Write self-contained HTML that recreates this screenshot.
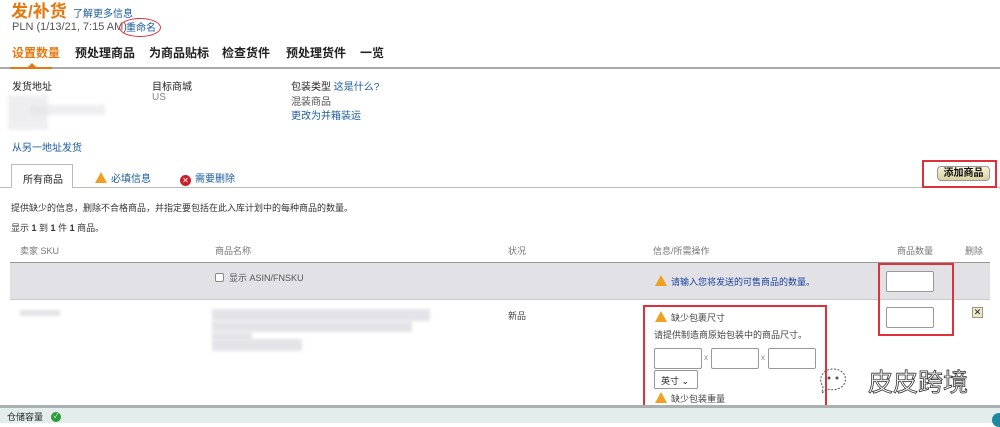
<!DOCTYPE html>
<html><head><meta charset="utf-8"><style>
*{margin:0;padding:0;box-sizing:border-box}
body{width:1000px;height:423px;overflow:hidden;background:#fff;font-family:"Liberation Sans","Noto Sans CJK SC",sans-serif;font-size:10px;color:#333;position:relative}
.a{position:absolute;white-space:nowrap}
.b{color:#1a5a9c}
.blur{position:absolute;background:#e4e4e8;filter:blur(1.5px)}
.inp{position:absolute;border:1px solid #999;background:#fff;border-radius:2px}
.warn{display:inline-block;width:0;height:0;border-left:6px solid transparent;border-right:6px solid transparent;border-bottom:11px solid #f0a020;vertical-align:-1px;margin-right:4px}
.rb{position:absolute;border:2px solid #e0303a}
</style></head><body>
<div class="a" style="left:11px;top:2px;font-size:17px;line-height:20px;font-weight:bold;color:#e47911">发/补货</div>
<div class="a b" style="left:73px;top:5px;font-size:10px">了解更多信息</div>
<div class="a" style="left:12px;top:21px;font-size:11px;line-height:13px;color:#555">PLN (1/13/21, 7:15 AM)</div>
<div class="a b" style="left:126px;top:19px;font-size:10px">重命名</div>
<div class="a" style="left:119px;top:18px;width:42px;height:19px;border:1.5px solid #e0303a;border-radius:50%"></div>
<div class="a" style="left:12px;top:44px;font-size:12px;font-weight:bold;color:#e47911">设置数量</div>
<div class="a" style="left:75px;top:44px;font-size:12px;font-weight:bold;color:#222">预处理商品</div>
<div class="a" style="left:149px;top:44px;font-size:12px;font-weight:bold;color:#222">为商品贴标</div>
<div class="a" style="left:222px;top:44px;font-size:12px;font-weight:bold;color:#222">检查货件</div>
<div class="a" style="left:286px;top:44px;font-size:12px;font-weight:bold;color:#222">预处理货件</div>
<div class="a" style="left:360px;top:44px;font-size:12px;font-weight:bold;color:#222">一览</div>
<div class="a" style="left:0;top:67px;width:1000px;height:2px;background:#aaa"></div>
<div class="a" style="left:10px;top:67px;width:42px;height:2px;background:#e47911"></div>
<div class="a" style="left:28px;top:63px;border-left:4px solid transparent;border-right:4px solid transparent;border-bottom:4px solid #e47911"></div>
<div class="a" style="left:12px;top:78px;font-size:10px;color:#222">发货地址</div>
<div class="a" style="left:152px;top:78px;font-size:10px;color:#222">目标商城</div>
<div class="a" style="left:152px;top:92px;font-size:10px;color:#888">US</div>
<div class="a" style="left:291px;top:78px;font-size:10px;color:#222">包装类型 <span class="b">这是什么?</span></div>
<div class="a" style="left:291px;top:93px;font-size:10px;color:#555">混装商品</div>
<div class="a b" style="left:291px;top:107px;font-size:10px">更改为并箱装运</div>
<div class="blur" style="left:8px;top:95px;width:40px;height:35px;opacity:.6"></div>
<div class="blur" style="left:30px;top:105px;width:75px;height:10px;opacity:.6"></div>
<div class="a b" style="left:12px;top:139px;font-size:10px">从另一地址发货</div>
<div class="a" style="left:0;top:187px;width:1000px;height:1px;background:#bbb"></div>
<div class="a" style="left:11px;top:164px;width:62px;height:24px;border:1px solid #bbb;border-bottom:none;background:#fff"></div>
<div class="a" style="left:23px;top:171px;font-size:10px;color:#222">所有商品</div>
<div class="a b" style="left:95px;top:170px;font-size:10px"><span class="warn"></span>必填信息</div>
<div class="a b" style="left:180px;top:170px;font-size:10px"><span style="display:inline-block;width:11px;height:11px;border-radius:50%;background:#c8202a;color:#fff;font-size:8px;line-height:11px;text-align:center;vertical-align:-1px;margin-right:4px">✕</span>需要删除</div>
<div class="rb" style="left:922px;top:160px;width:75px;height:28px"></div>
<div class="a" style="left:937px;top:166px;width:53px;height:15px;border:1px solid #999;border-radius:4px;background:linear-gradient(#f6f2d6,#d8d2a0);font-size:10px;font-weight:bold;color:#111;text-align:center;line-height:13px">添加商品</div>
<div class="a" style="left:11px;top:201px;font-size:9px;color:#333">提供缺少的信息，删除不合格商品，并指定要包括在此入库计划中的每种商品的数量。</div>
<div class="a" style="left:11px;top:221px;font-size:9px;color:#333">显示 <b>1</b> 到 <b>1</b> 件 <b>1</b> 商品。</div>
<div class="a" style="left:20px;top:244px;font-size:9px;color:#777">卖家 SKU</div>
<div class="a" style="left:215px;top:244px;font-size:9px;color:#777">商品名称</div>
<div class="a" style="left:508px;top:244px;font-size:9px;color:#777">状况</div>
<div class="a" style="left:653px;top:244px;font-size:9px;color:#777">信息/所需操作</div>
<div class="a" style="left:897px;top:244px;font-size:9px;color:#777">商品数量</div>
<div class="a" style="left:965px;top:244px;font-size:9px;color:#777">删除</div>
<div class="a" style="left:10px;top:262px;width:980px;height:38px;background:#e2e2e6;border-top:1.5px solid #999;border-bottom:1px solid #ccc"></div>
<div class="a" style="left:215px;top:273px;width:9px;height:9px;border:1px solid #888;background:#fff;border-radius:2px"></div>
<div class="a" style="left:229px;top:271px;font-size:9px;color:#555">显示 ASIN/FNSKU</div>
<div class="a" style="left:655px;top:275px;font-size:9px;color:#1a3f9c"><span class="warn"></span>请输入您将发送的可售商品的数量。</div>
<div class="rb" style="left:878px;top:263px;width:76px;height:73px"></div>
<div class="inp" style="left:886px;top:271px;width:48px;height:21px"></div>
<div class="inp" style="left:886px;top:307px;width:48px;height:21px"></div>
<div class="blur" style="left:20px;top:310px;width:40px;height:6px"></div>
<div class="blur" style="left:212px;top:309px;width:218px;height:12px"></div>
<div class="blur" style="left:212px;top:321px;width:200px;height:11px"></div>
<div class="blur" style="left:212px;top:332px;width:40px;height:8px"></div>
<div class="blur" style="left:212px;top:339px;width:90px;height:12px"></div>
<div class="a" style="left:508px;top:309px;font-size:9px;color:#444">新品</div>
<div class="a" style="left:972px;top:307px;width:11px;height:11px;border:1px solid #998;background:#eee9c8;font-size:9px;line-height:9px;text-align:center;color:#222">✕</div>
<div class="rb" style="left:643px;top:305px;width:184px;height:103px"></div>
<div class="a" style="left:655px;top:311px;font-size:9px;color:#444"><span class="warn"></span>缺少包裹尺寸</div>
<div class="a" style="left:654px;top:328px;font-size:9px;color:#444">请提供制造商原始包装中的商品尺寸。</div>
<div class="inp" style="left:654px;top:348px;width:48px;height:21px"></div>
<div class="a" style="left:704px;top:353px;font-size:8px;color:#888">x</div>
<div class="inp" style="left:711px;top:348px;width:48px;height:21px"></div>
<div class="a" style="left:761px;top:353px;font-size:8px;color:#888">x</div>
<div class="inp" style="left:768px;top:348px;width:48px;height:21px"></div>
<div class="inp" style="left:654px;top:370px;width:44px;height:19px;font-size:9px;padding:3px 0 0 6px;color:#222">英寸 ⌄</div>
<div class="a" style="left:655px;top:392px;font-size:9px;color:#444"><span class="warn"></span>缺少包装重量</div>
<svg class="a" style="left:818px;top:365px" width="36" height="30" viewBox="0 0 36 30"><path d="M4 20 C0 12 6 4 15 4 C24 4 29 10 27 17 C25 24 16 26 9 24 L4 28 L5 22 Z" fill="none" stroke="#555" stroke-width="1" stroke-dasharray="2 1.5"/><circle cx="11" cy="13" r="1.5" fill="#555"/><circle cx="19" cy="13" r="1.5" fill="#555"/></svg>
<div class="a" style="left:868px;top:366px;font-size:25px;line-height:30px;color:#fff;-webkit-text-stroke:0.8px #333;font-family:'Noto Sans CJK SC',sans-serif">皮皮跨境</div>
<div class="a" style="left:0;top:405px;width:1000px;height:18px;background:#e3eeec;border-top:3px solid #a8b0b0"></div>
<div class="a" style="left:7px;top:410px;font-size:9px;color:#222">仓储容量</div>
<div class="a" style="left:51px;top:412px;width:10px;height:10px;border-radius:50%;background:#2a9a3a;color:#fff;font-size:7px;line-height:10px;text-align:center">✓</div>
<div class="a" style="left:992px;top:413px;width:14px;height:14px;border-radius:50%;background:#1a8aa0"></div>
</body></html>
